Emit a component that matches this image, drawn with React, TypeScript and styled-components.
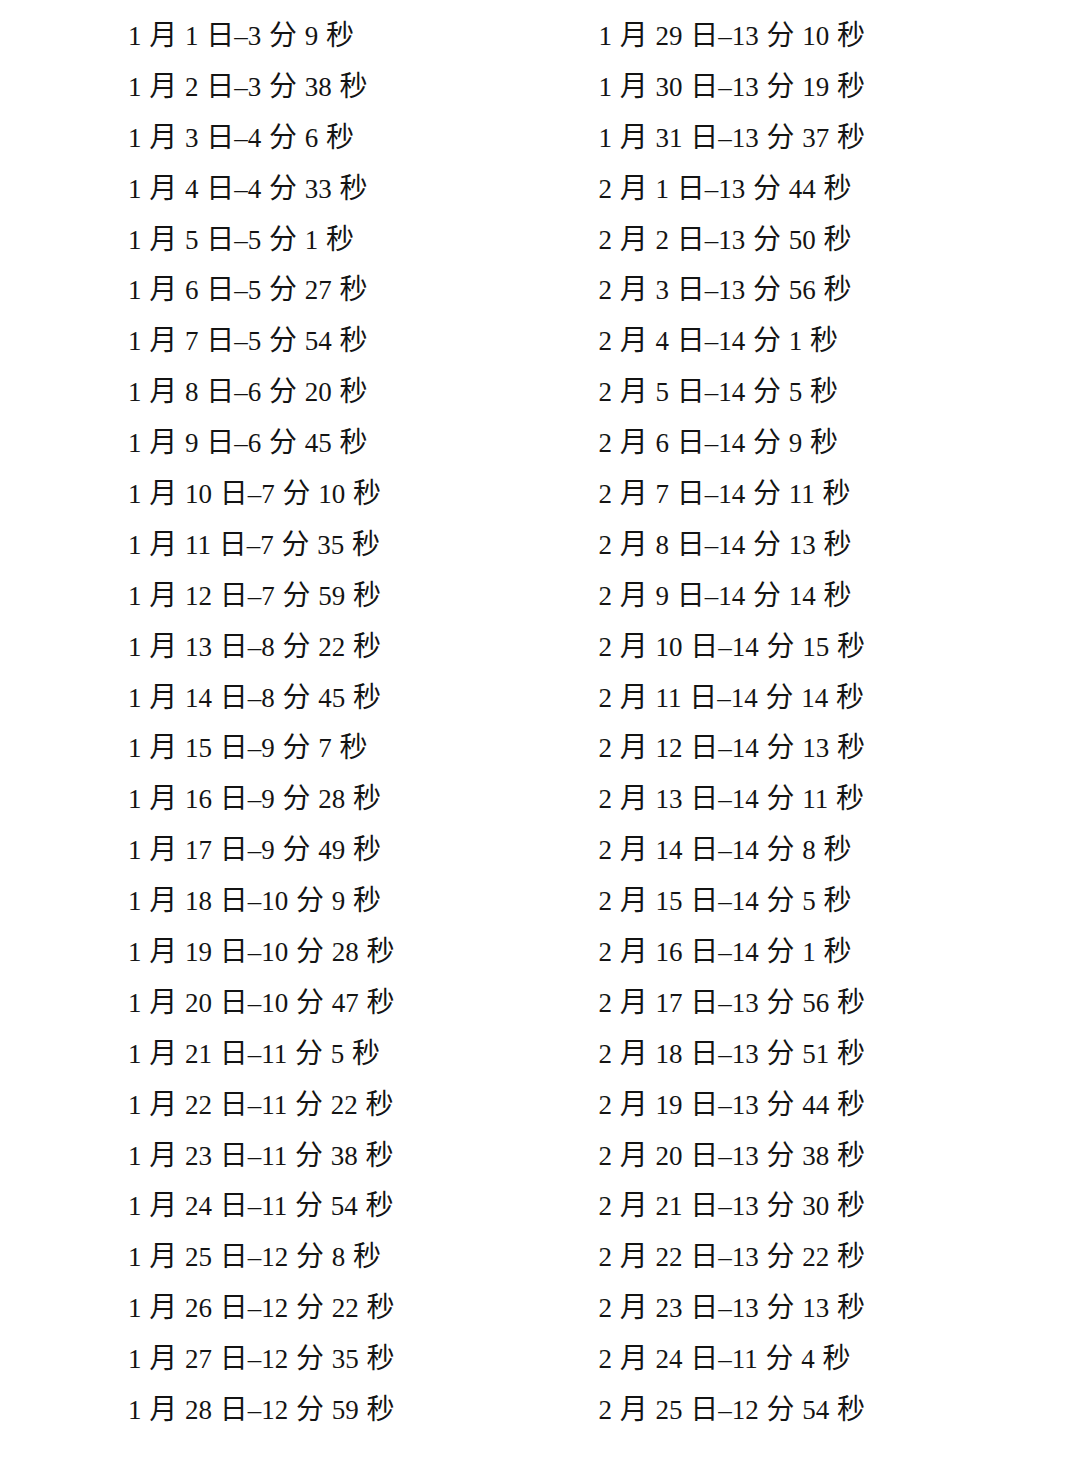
import React from "react";
import styled, { createGlobalStyle } from "styled-components";

const Global = createGlobalStyle`
  html, body { margin: 0; padding: 0; background: #ffffff; }
  body { width: 1080px; height: 1459px; overflow: hidden; }
`;

const Page = styled.div`
  box-sizing: border-box;
  width: 1080px;
  height: 1459px;
  padding: 11px 0 0 128px;
  display: grid;
  grid-template-columns: 470.5px 470px;
  background: #fff;
`;

const Column = styled.div`
  display: grid;
  grid-auto-rows: 50.9px;
`;

const Line = styled.div`
  font-family: "Liberation Serif", "Noto Sans CJK SC", serif;
  font-size: 27px;
  color: #141414;
  line-height: 50.9px;
  word-spacing: 1px;
  white-space: pre;
`;

const Han = styled.span`
  font-family: "Noto Sans CJK SC", sans-serif;
  font-size: 28px;
  font-weight: 400;
  line-height: 1;
`;

type Row = [number, number, number, number];

const left: Row[] = [
  [1, 1, 3, 9], [1, 2, 3, 38], [1, 3, 4, 6], [1, 4, 4, 33], [1, 5, 5, 1],
  [1, 6, 5, 27], [1, 7, 5, 54], [1, 8, 6, 20], [1, 9, 6, 45], [1, 10, 7, 10],
  [1, 11, 7, 35], [1, 12, 7, 59], [1, 13, 8, 22], [1, 14, 8, 45], [1, 15, 9, 7],
  [1, 16, 9, 28], [1, 17, 9, 49], [1, 18, 10, 9], [1, 19, 10, 28], [1, 20, 10, 47],
  [1, 21, 11, 5], [1, 22, 11, 22], [1, 23, 11, 38], [1, 24, 11, 54], [1, 25, 12, 8],
  [1, 26, 12, 22], [1, 27, 12, 35], [1, 28, 12, 59],
];

const right: Row[] = [
  [1, 29, 13, 10], [1, 30, 13, 19], [1, 31, 13, 37], [2, 1, 13, 44], [2, 2, 13, 50],
  [2, 3, 13, 56], [2, 4, 14, 1], [2, 5, 14, 5], [2, 6, 14, 9], [2, 7, 14, 11],
  [2, 8, 14, 13], [2, 9, 14, 14], [2, 10, 14, 15], [2, 11, 14, 14], [2, 12, 14, 13],
  [2, 13, 14, 11], [2, 14, 14, 8], [2, 15, 14, 5], [2, 16, 14, 1], [2, 17, 13, 56],
  [2, 18, 13, 51], [2, 19, 13, 44], [2, 20, 13, 38], [2, 21, 13, 30], [2, 22, 13, 22],
  [2, 23, 13, 13], [2, 24, 11, 4], [2, 25, 12, 54],
];

function Entry({ r }: { r: Row }) {
  const [m, d, mi, s] = r;
  return (
    <Line>
      {m} <Han>月</Han> {d} <Han>日</Han>–{mi} <Han>分</Han> {s} <Han>秒</Han>
    </Line>
  );
}

export default function App() {
  return (
    <>
      <Global />
      <Page>
        <Column>
          {left.map((r, i) => (
            <Entry key={i} r={r} />
          ))}
        </Column>
        <Column>
          {right.map((r, i) => (
            <Entry key={i} r={r} />
          ))}
        </Column>
      </Page>
    </>
  );
}
